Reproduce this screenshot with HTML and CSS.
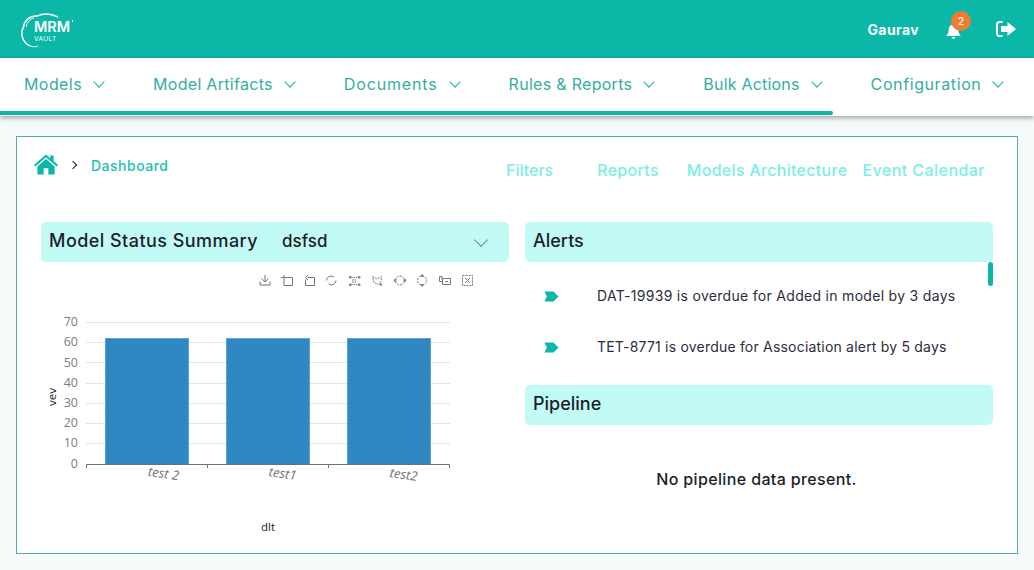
FILE: index.html
```html
<!DOCTYPE html>
<html lang="en">
<head>
    <meta charset="UTF-8">
    <title>MRM Vault</title>
    <link rel="stylesheet" href="styles.css">
</head>
<body>
    <header class="topbar">
        <div class="logo">
            <svg class="logo-cloud" width="56" height="38" viewBox="0 0 56 38" fill="none" stroke="#fff">
                <path d="M38 6 C32 3 24 2 17 5 C10 4 4 10 3.500 16 C0 22 2 31 10 35" stroke-width="1.5"/>
                <path d="M6 16 C7 11 10 8 14 7" stroke-width="1"/>
                <path d="M10 35 C13 36 16 36 18 35" stroke-width="1"/>
            </svg>
            <span class="logo-mrm">MRM</span>
            <span class="logo-dot"></span>
            <span class="logo-vault">VAULT</span>
        </div>
        <div class="user">
            <span class="user-name">Gaurav</span>
            <span class="bell">
                <svg width="15" height="16" viewBox="0 0 15 16" fill="#fff">
                    <path d="M7.500 0.500 C8.300 0.500 8.800 1 8.800 1.800 C11 2.300 12.300 4.200 12.300 6.500 C12.300 9.500 13 11 14.500 12.500 L14.500 13 L0.500 13 L0.500 12.500 C2 11 2.700 9.500 2.700 6.500 C2.700 4.200 4 2.300 6.200 1.800 C6.200 1 6.700 0.500 7.500 0.500 Z"/>
                    <path d="M5.600 14 L9.400 14 C9.300 15.100 8.500 15.800 7.500 15.800 C6.500 15.800 5.700 15.100 5.600 14 Z"/>
                </svg>
                <span class="badge">2</span>
            </span>
            <svg class="logout" width="20" height="16" viewBox="0 0 20 16" fill="#fff">
                <path d="M6.500 1 L3.500 1 C1.800 1 1 2 1 3.500 L1 12.500 C1 14 1.800 15 3.500 15 L6.500 15" fill="none" stroke="#fff" stroke-width="2"/>
                <path d="M11.500 1 L20 8 L11.500 15 L11.500 11 L5 11 L5 5 L11.500 5 Z"/>
            </svg>
        </div>
    </header>

    <nav class="menu">
        <a class="menu-item">Models <i class="chev"></i></a>
        <a class="menu-item item-artifacts">Model Artifacts <i class="chev"></i></a>
        <a class="menu-item item-documents">Documents <i class="chev"></i></a>
        <a class="menu-item item-rules">Rules &amp; Reports <i class="chev"></i></a>
        <a class="menu-item item-bulk">Bulk Actions <i class="chev"></i></a>
        <a class="menu-item item-config">Configuration <i class="chev"></i></a>
        <div class="menu-line"></div>
    </nav>

    <main class="panel">
        <div class="panel-top">
            <div class="crumbs">
                <svg width="26" height="21" viewBox="0 0 26 22" fill="#0bb7a7">
                    <path d="M13 0.500 L17.500 4.400 L17.500 1.500 L21 1.500 L21 7.400 L25.600 11.400 L24.200 13 L13 3.400 L1.800 13 L0.400 11.400 Z"/>
                    <path d="M4 13 L13 5.300 L22 13 L22 21.500 L15.500 21.500 L15.500 15 L10.500 15 L10.500 21.500 L4 21.500 Z"/>
                </svg>
                <i class="crumb-sep"></i>
                <span class="crumb-text">Dashboard</span>
            </div>
            <div class="tabs">
                <a class="tab tab-filters">Filters</a>
                <a class="tab tab-reports">Reports</a>
                <a class="tab tab-arch">Models Architecture</a>
                <a class="tab tab-event">Event Calendar</a>
            </div>
        </div>

        <div class="columns">
            <section class="col">
                <div class="bar bar-select">
                    <span class="bar-title">Model Status Summary</span>
                    <span class="bar-value">dsfsd</span>
                    <i class="bar-chev"></i>
                </div>
                <svg class="chart" width="468" height="280" viewBox="41 262 468 280">
                    <g fill="none" stroke="#777" stroke-width="1">
                        <path d="M260 281.500v3.500h10v-3.500M265 275v7M261.500 278.500l3.500 3.500 3.500-3.500"/>
                        <path d="M283.500 277.500h9v8h-8.500v-8M284 275v3M281 277.500h3"/>
                        <path d="M307.500 277.500h7v8h-9v-6M308 275l-2.500 2.500 2.500 2.500"/>
                        <path d="M336 280.500a4.500 4.500 0 0 1-7.500 3.300M326.500 280.500a4.500 4.500 0 0 1 7.500-3.300"/>
                        <path d="M351 277.500h7M351 284.500h7M352 280h5M352 282h5" stroke-dasharray="1.500 1"/>
                        <path d="M349.500 276.500h1.500v1.500h-1.500zM358.500 276.500h1.500v1.500h-1.500zM349.500 284h1.500v1.500h-1.500zM358.500 284h1.500v1.500h-1.500z"/>
                        <path d="M372.500 276.500l4.500 2.500 4.500-2.500-.5 5-3 3-4-2z" stroke-dasharray="2 1"/>
                        <path d="M380 283.500l1.500 2" stroke-width="2"/>
                        <path d="M400 276a4.500 4.500 0 1 1-.1 0z" stroke-dasharray="2 1"/>
                        <path d="M394.500 279.500h1.500v2h-1.500zM404 279.500h1.500v2h-1.500z"/>
                        <path d="M422 276a4.500 4.500 0 1 1-.1 0z" stroke-dasharray="2 1"/>
                        <path d="M421 275h2v1.500h-2zM421 284.500h2v1.500h-2z"/>
                        <path d="M442 279.500v-3h-2.500v5h3M442.500 278.500h8v6h-8z"/>
                        <path d="M445 281.500h3" stroke-width="1"/>
                        <path d="M462.500 275.500h10v10h-10z" stroke-dasharray="2 1"/>
                        <path d="M465 278l5 5M470 278l-5 5"/>
                    </g>

                    <g stroke="#e0e6f1" stroke-width="1">
                        <line x1="86" x2="450" y1="322.500" y2="322.500"/>
                        <line x1="86" x2="450" y1="342.500" y2="342.500"/>
                        <line x1="86" x2="450" y1="362.500" y2="362.500"/>
                        <line x1="86" x2="450" y1="383.500" y2="383.500"/>
                        <line x1="86" x2="450" y1="403.500" y2="403.500"/>
                        <line x1="86" x2="450" y1="423.500" y2="423.500"/>
                        <line x1="86" x2="450" y1="443.500" y2="443.500"/>
                    </g>

                    <g fill="#2f88c2" stroke="#5aa5d6" stroke-width="1">
                        <rect x="105.500" y="338.500" width="83" height="126"/>
                        <rect x="226.500" y="338.500" width="83" height="126"/>
                        <rect x="347.500" y="338.500" width="83" height="126"/>
                    </g>

                    <path d="M86.500 468v-3.500h363V468M207.500 464.500V468M328.500 464.500V468" fill="none" stroke="#6e7079"/>

                    <g class="axis-num" text-anchor="end">
                        <text x="78" y="326">70</text>
                        <text x="78" y="346">60</text>
                        <text x="78" y="367">50</text>
                        <text x="78" y="387">40</text>
                        <text x="78" y="407">30</text>
                        <text x="78" y="427">20</text>
                        <text x="78" y="447">10</text>
                        <text x="78" y="468">0</text>
                    </g>
                    <g class="axis-cat" text-anchor="middle">
                        <text transform="translate(163 478) rotate(8)">test 2</text>
                        <text transform="translate(282 478) rotate(8)">test1</text>
                        <text transform="translate(403 479) rotate(8)">test2</text>
                    </g>
                    <text class="axis-name" transform="translate(56 397) rotate(-90)" text-anchor="middle">vev</text>
                    <text class="axis-name" x="268" y="531" text-anchor="middle">dlt</text>
                </svg>
            </section>

            <section class="col">
                <div class="bar"><span class="bar-title">Alerts</span></div>
                <div class="alerts">
                    <div class="alert">
                        <svg width="15" height="11" viewBox="0 0 15 11" fill="#0bb7a7"><path d="M0.500 0.500 L9.500 0.500 L14.500 5.500 L9.500 10.500 L0.500 10.500 L2.800 5.500 Z"/></svg>
                        <span>DAT-19939 is overdue for Added in model by 3 days</span>
                    </div>
                    <div class="alert">
                        <svg width="15" height="11" viewBox="0 0 15 11" fill="#0bb7a7"><path d="M0.500 0.500 L9.500 0.500 L14.500 5.500 L9.500 10.500 L0.500 10.500 L2.800 5.500 Z"/></svg>
                        <span>TET-8771 is overdue for Association alert by 5 days</span>
                    </div>
                    <div class="scroll-thumb"></div>
                </div>
                <div class="bar"><span class="bar-title">Pipeline</span></div>
                <p class="empty">No pipeline data present.</p>
            </section>
        </div>
    </main>
</body>
</html>
```

FILE: styles.css
```css
* {
    margin: 0;
    padding: 0;
    box-sizing: border-box;
}
body {
    width: 1034px;
    height: 570px;
    overflow: hidden;
    background-color: #f5fbfa;
    font-family: "Inter", "Open Sans", sans-serif;
    color: #1f2430;
}

.topbar {
    height: 58px;
    background-color: #0bb7a7;
    display: flex;
    justify-content: space-between;
    align-items: center;
    padding: 0 18px 0 20px;
    color: #fff;
}
.logo {
    position: relative;
    width: 60px;
    height: 38px;
}
.logo-cloud {
    position: absolute;
    left: 0;
    top: 1px;
}
.logo-mrm {
    position: absolute;
    left: 14px;
    top: 9px;
    font-size: 14.5px;
    line-height: 15px;
    font-weight: 600;
}
.logo-dot {
    position: absolute;
    left: 52px;
    top: 10px;
    width: 1px;
    height: 2px;
    background-color: #fff;
}
.logo-vault {
    position: absolute;
    left: 14px;
    top: 26px;
    font-size: 6.5px;
    line-height: 7px;
    letter-spacing: 0.4px;
}
.user {
    display: flex;
    align-items: center;
}
.user-name {
    font-size: 14px;
    font-weight: 700;
    letter-spacing: 0.4px;
    margin-right: 27px;
}
.bell {
    position: relative;
    display: flex;
    margin-right: 35px;
    margin-top: 4px;
}
.badge {
    position: absolute;
    left: 5px;
    top: -12px;
    width: 20px;
    height: 20px;
    border-radius: 50%;
    background-color: #ed7d31;
    font-size: 10px;
    font-weight: 500;
    line-height: 20px;
    text-align: center;
}

.menu {
    position: relative;
    height: 58px;
    background-color: #fff;
    box-shadow: 0 2px 5px rgba(0, 0, 0, 0.35);
    display: flex;
    gap: 48px;
    padding: 16px 0 0 24px;
}
.menu-item {
    display: flex;
    align-items: flex-start;
    font-size: 16px;
    line-height: 21px;
    letter-spacing: 0.42px;
    color: #35ada1;
    white-space: nowrap;
}
.item-artifacts,
.item-rules {
    letter-spacing: 0.3px;
}
.item-documents {
    letter-spacing: 0.85px;
}
.item-bulk {
    letter-spacing: 0.2px;
}
.item-config {
    letter-spacing: 0.6px;
}
.chev {
    display: block;
    width: 8px;
    height: 8px;
    margin: 4px 2px 0 13px;
    border-right: 1.5px solid #12b5a6;
    border-bottom: 1.5px solid #12b5a6;
    transform: rotate(45deg);
}
.menu-line {
    position: absolute;
    left: 0;
    bottom: 1px;
    width: 833px;
    height: 4px;
    border-radius: 0 2px 2px 0;
    background-color: #0bb7a7;
}

.panel {
    margin: 20px 16px 0;
    height: 418px;
    background-color: #fff;
    border: 1px solid #5aa9a2;
    padding: 15px 24px 0;
}
.panel-top {
    height: 70px;
    display: flex;
    justify-content: space-between;
}
.crumbs {
    display: flex;
    align-items: center;
    height: 24px;
    margin-left: -8px;
}
.crumb-sep {
    display: block;
    width: 6px;
    height: 6px;
    margin: 2px 15px 0 11px;
    border-right: 1.5px solid #1f2430;
    border-top: 1.5px solid #1f2430;
    transform: rotate(45deg);
}
.crumb-text {
    font-size: 14px;
    font-weight: 500;
    letter-spacing: 0.5px;
    margin-top: 2px;
    color: #1fbfae;
}
.tabs {
    display: flex;
    margin: 8px 8px 0 0;
    font-size: 16px;
    font-weight: 500;
    line-height: 20px;
    letter-spacing: 0.3px;
    color: #7ceee2;
}
.tab {
    white-space: nowrap;
}
.tab-filters {
    margin-right: 44px;
    letter-spacing: 0;
}
.tab-reports {
    margin-right: 28px;
}
.tab-arch {
    margin-right: 15px;
}
.tab-event {
    letter-spacing: 0.45px;
}

.columns {
    display: grid;
    grid-template-columns: 468px 468px;
    gap: 16px;
}
.bar {
    height: 40px;
    background-color: #c2fbf5;
    border-radius: 5px;
    display: flex;
    align-items: center;
    padding: 0 8px 3px;
}
.bar-title {
    font-size: 18px;
    font-weight: 500;
    color: #1b1f2a;
}
.bar-select .bar-title {
    letter-spacing: 0.45px;
}
.bar-value {
    margin-left: 24px;
    margin-top: 1px;
    font-size: 17px;
    font-weight: 500;
    color: #1b1f2a;
}
.bar-chev {
    display: block;
    width: 10px;
    height: 10px;
    margin: -2px 15px 0 auto;
    border-right: 1px solid #7a8a88;
    border-bottom: 1px solid #7a8a88;
    transform: rotate(45deg);
}
.chart {
    display: block;
}
.axis-num {
    font-family: "Open Sans", sans-serif;
    font-size: 12.5px;
    fill: #7a7c85;
}
.axis-cat {
    font-family: "Open Sans", sans-serif;
    font-size: 13px;
    font-style: italic;
    fill: #6e7079;
}
.axis-name {
    font-family: "Open Sans", sans-serif;
    font-size: 11.5px;
    fill: #222;
}

.alerts {
    position: relative;
    height: 123px;
    padding: 23px 0 0 19px;
}
.alert {
    display: flex;
    align-items: center;
    height: 20px;
    margin-bottom: 31px;
    font-size: 14px;
    letter-spacing: 0.3px;
    color: #2a2e3c;
}
.alert + .alert {
    letter-spacing: 0.2px;
}
.alert svg {
    margin-right: 38px;
    margin-top: 2px;
}
.scroll-thumb {
    position: absolute;
    right: 0;
    top: 0;
    width: 5px;
    height: 24px;
    border-radius: 3px;
    background-color: #0bb7a7;
}
.empty {
    margin-top: 44px;
    padding-right: 5px;
    text-align: center;
    font-size: 16px;
    font-weight: 500;
    letter-spacing: 0.36px;
    color: #1b1f2a;
}
```
